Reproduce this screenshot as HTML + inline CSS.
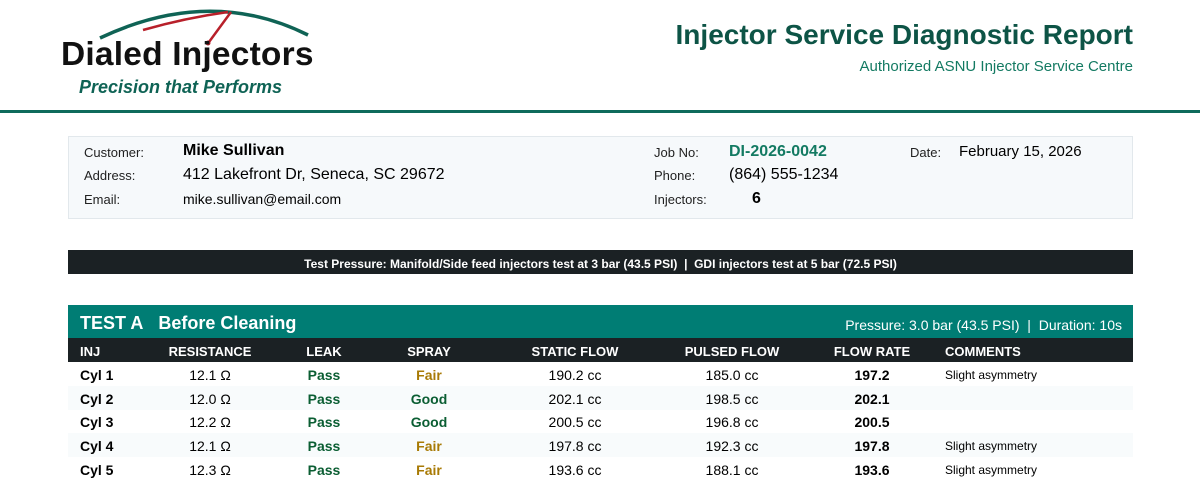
<!DOCTYPE html><html><head><style>
body{margin:0;width:1200px;height:467px;overflow:hidden;background:#fff;font-family:"Liberation Sans",sans-serif;position:relative}
.a{position:absolute;white-space:nowrap}
.l{font-size:13px;color:#222}
.c{position:absolute;transform:translateX(-50%);white-space:nowrap}
.row{position:absolute;left:68px;width:1065px;height:24px}
.row span{position:absolute;top:5px;font-size:14px;white-space:nowrap}
.b{font-weight:bold}
.g{color:#0b5e33;font-weight:bold}
.f{color:#a87a05;font-weight:bold}
</style></head><body>
<svg class="a" style="left:60px;top:0" width="260" height="50" viewBox="0 0 260 50">
<path d="M40 38 Q150 -14 248 35" stroke="#0f6355" stroke-width="3.5" fill="none"/>
<path d="M83 30 Q125 18 168 12" stroke="#b8202a" stroke-width="2.5" fill="none"/>
<path d="M171 12 L149 42" stroke="#b8202a" stroke-width="2.5"/>
<circle cx="148" cy="43" r="2.5" fill="#b8202a"/>
</svg>
<div class="a" style="left:61px;top:36px;font-size:33.5px;font-weight:bold;color:#111;letter-spacing:0.2px">Dialed Injectors</div>
<div class="a" style="left:79px;top:77px;font-size:18px;font-weight:bold;font-style:italic;color:#0f6355">Precision that Performs</div>
<div class="a" style="right:67px;top:19px;font-size:28px;font-weight:bold;color:#0d5446">Injector Service Diagnostic Report</div>
<div class="a" style="right:67px;top:58px;font-size:15px;color:#137a62">Authorized ASNU Injector Service Centre</div>
<div class="a" style="left:0;top:110px;width:1200px;height:3px;background:#0f6b5c"></div>
<div class="a" style="left:68px;top:136px;width:1063px;height:81px;background:#f6f9fb;border:1px solid #e2e8ec"></div>
<div class="a l" style="left:84px;top:145px">Customer:</div>
<div class="a" style="left:183px;top:142px;font-size:16px;font-weight:bold">Mike Sullivan</div>
<div class="a l" style="left:84px;top:168px">Address:</div>
<div class="a" style="left:183px;top:166px;font-size:16px">412 Lakefront Dr, Seneca, SC 29672</div>
<div class="a l" style="left:84px;top:192px">Email:</div>
<div class="a" style="left:183px;top:191px;font-size:14px">mike.sullivan@email.com</div>
<div class="a l" style="left:654px;top:145px">Job No:</div>
<div class="a" style="left:729px;top:143px;font-size:16px;font-weight:bold;color:#137a62">DI-2026-0042</div>
<div class="a l" style="left:654px;top:168px">Phone:</div>
<div class="a" style="left:729px;top:166px;font-size:16px">(864) 555-1234</div>
<div class="a l" style="left:654px;top:192px">Injectors:</div>
<div class="a" style="left:752px;top:190px;font-size:16px;font-weight:bold">6</div>
<div class="a l" style="left:910px;top:145px">Date:</div>
<div class="a" style="left:959px;top:143px;font-size:15px">February 15, 2026</div>
<div class="a" style="left:68px;top:250px;width:1065px;height:24px;background:#1b2124;color:#fff;font-size:12px;font-weight:bold;text-align:center;line-height:28px">Test Pressure: Manifold/Side feed injectors test at 3 bar (43.5 PSI) &nbsp;|&nbsp; GDI injectors test at 5 bar (72.5 PSI)</div>
<div class="a" style="left:68px;top:305px;width:1065px;height:33px;background:#007d74"></div>
<div class="a" style="left:80px;top:313px;font-size:18px;font-weight:bold;color:#fff">TEST A&nbsp;&nbsp; Before Cleaning</div>
<div class="a" style="right:78px;top:317px;font-size:14px;color:#fff">Pressure: 3.0 bar (43.5 PSI) &nbsp;|&nbsp; Duration: 10s</div>
<div class="row" style="top:338px;background:#1b2124;color:#fff">
<span class="b" style="left:12px;top:6px;font-size:13px">INJ</span>
<span class="b c" style="left:142px;top:6px;font-size:13px">RESISTANCE</span>
<span class="b c" style="left:256px;top:6px;font-size:13px">LEAK</span>
<span class="b c" style="left:361px;top:6px;font-size:13px">SPRAY</span>
<span class="b c" style="left:507px;top:6px;font-size:13px">STATIC FLOW</span>
<span class="b c" style="left:664px;top:6px;font-size:13px">PULSED FLOW</span>
<span class="b c" style="left:804px;top:6px;font-size:13px">FLOW RATE</span>
<span class="b" style="left:877px;top:6px;font-size:13px">COMMENTS</span></div>
<div class="row" style="top:362px"><span class="b" style="left:12px">Cyl 1</span><span class="c" style="left:142px">12.1 Ω</span><span class="c g" style="left:256px">Pass</span><span class="c f" style="left:361px">Fair</span><span class="c" style="left:507px">190.2 cc</span><span class="c" style="left:664px">185.0 cc</span><span class="c b" style="left:804px">197.2</span><span style="left:877px;font-size:12px;top:6px">Slight asymmetry</span></div>
<div class="row" style="top:386px;background:#f8fbfc"><span class="b" style="left:12px">Cyl 2</span><span class="c" style="left:142px">12.0 Ω</span><span class="c g" style="left:256px">Pass</span><span class="c g" style="left:361px">Good</span><span class="c" style="left:507px">202.1 cc</span><span class="c" style="left:664px">198.5 cc</span><span class="c b" style="left:804px">202.1</span></div>
<div class="row" style="top:409px"><span class="b" style="left:12px">Cyl 3</span><span class="c" style="left:142px">12.2 Ω</span><span class="c g" style="left:256px">Pass</span><span class="c g" style="left:361px">Good</span><span class="c" style="left:507px">200.5 cc</span><span class="c" style="left:664px">196.8 cc</span><span class="c b" style="left:804px">200.5</span></div>
<div class="row" style="top:433px;background:#f8fbfc"><span class="b" style="left:12px">Cyl 4</span><span class="c" style="left:142px">12.1 Ω</span><span class="c g" style="left:256px">Pass</span><span class="c f" style="left:361px">Fair</span><span class="c" style="left:507px">197.8 cc</span><span class="c" style="left:664px">192.3 cc</span><span class="c b" style="left:804px">197.8</span><span style="left:877px;font-size:12px;top:6px">Slight asymmetry</span></div>
<div class="row" style="top:457px"><span class="b" style="left:12px">Cyl 5</span><span class="c" style="left:142px">12.3 Ω</span><span class="c g" style="left:256px">Pass</span><span class="c f" style="left:361px">Fair</span><span class="c" style="left:507px">193.6 cc</span><span class="c" style="left:664px">188.1 cc</span><span class="c b" style="left:804px">193.6</span><span style="left:877px;font-size:12px;top:6px">Slight asymmetry</span></div>
</body></html>
